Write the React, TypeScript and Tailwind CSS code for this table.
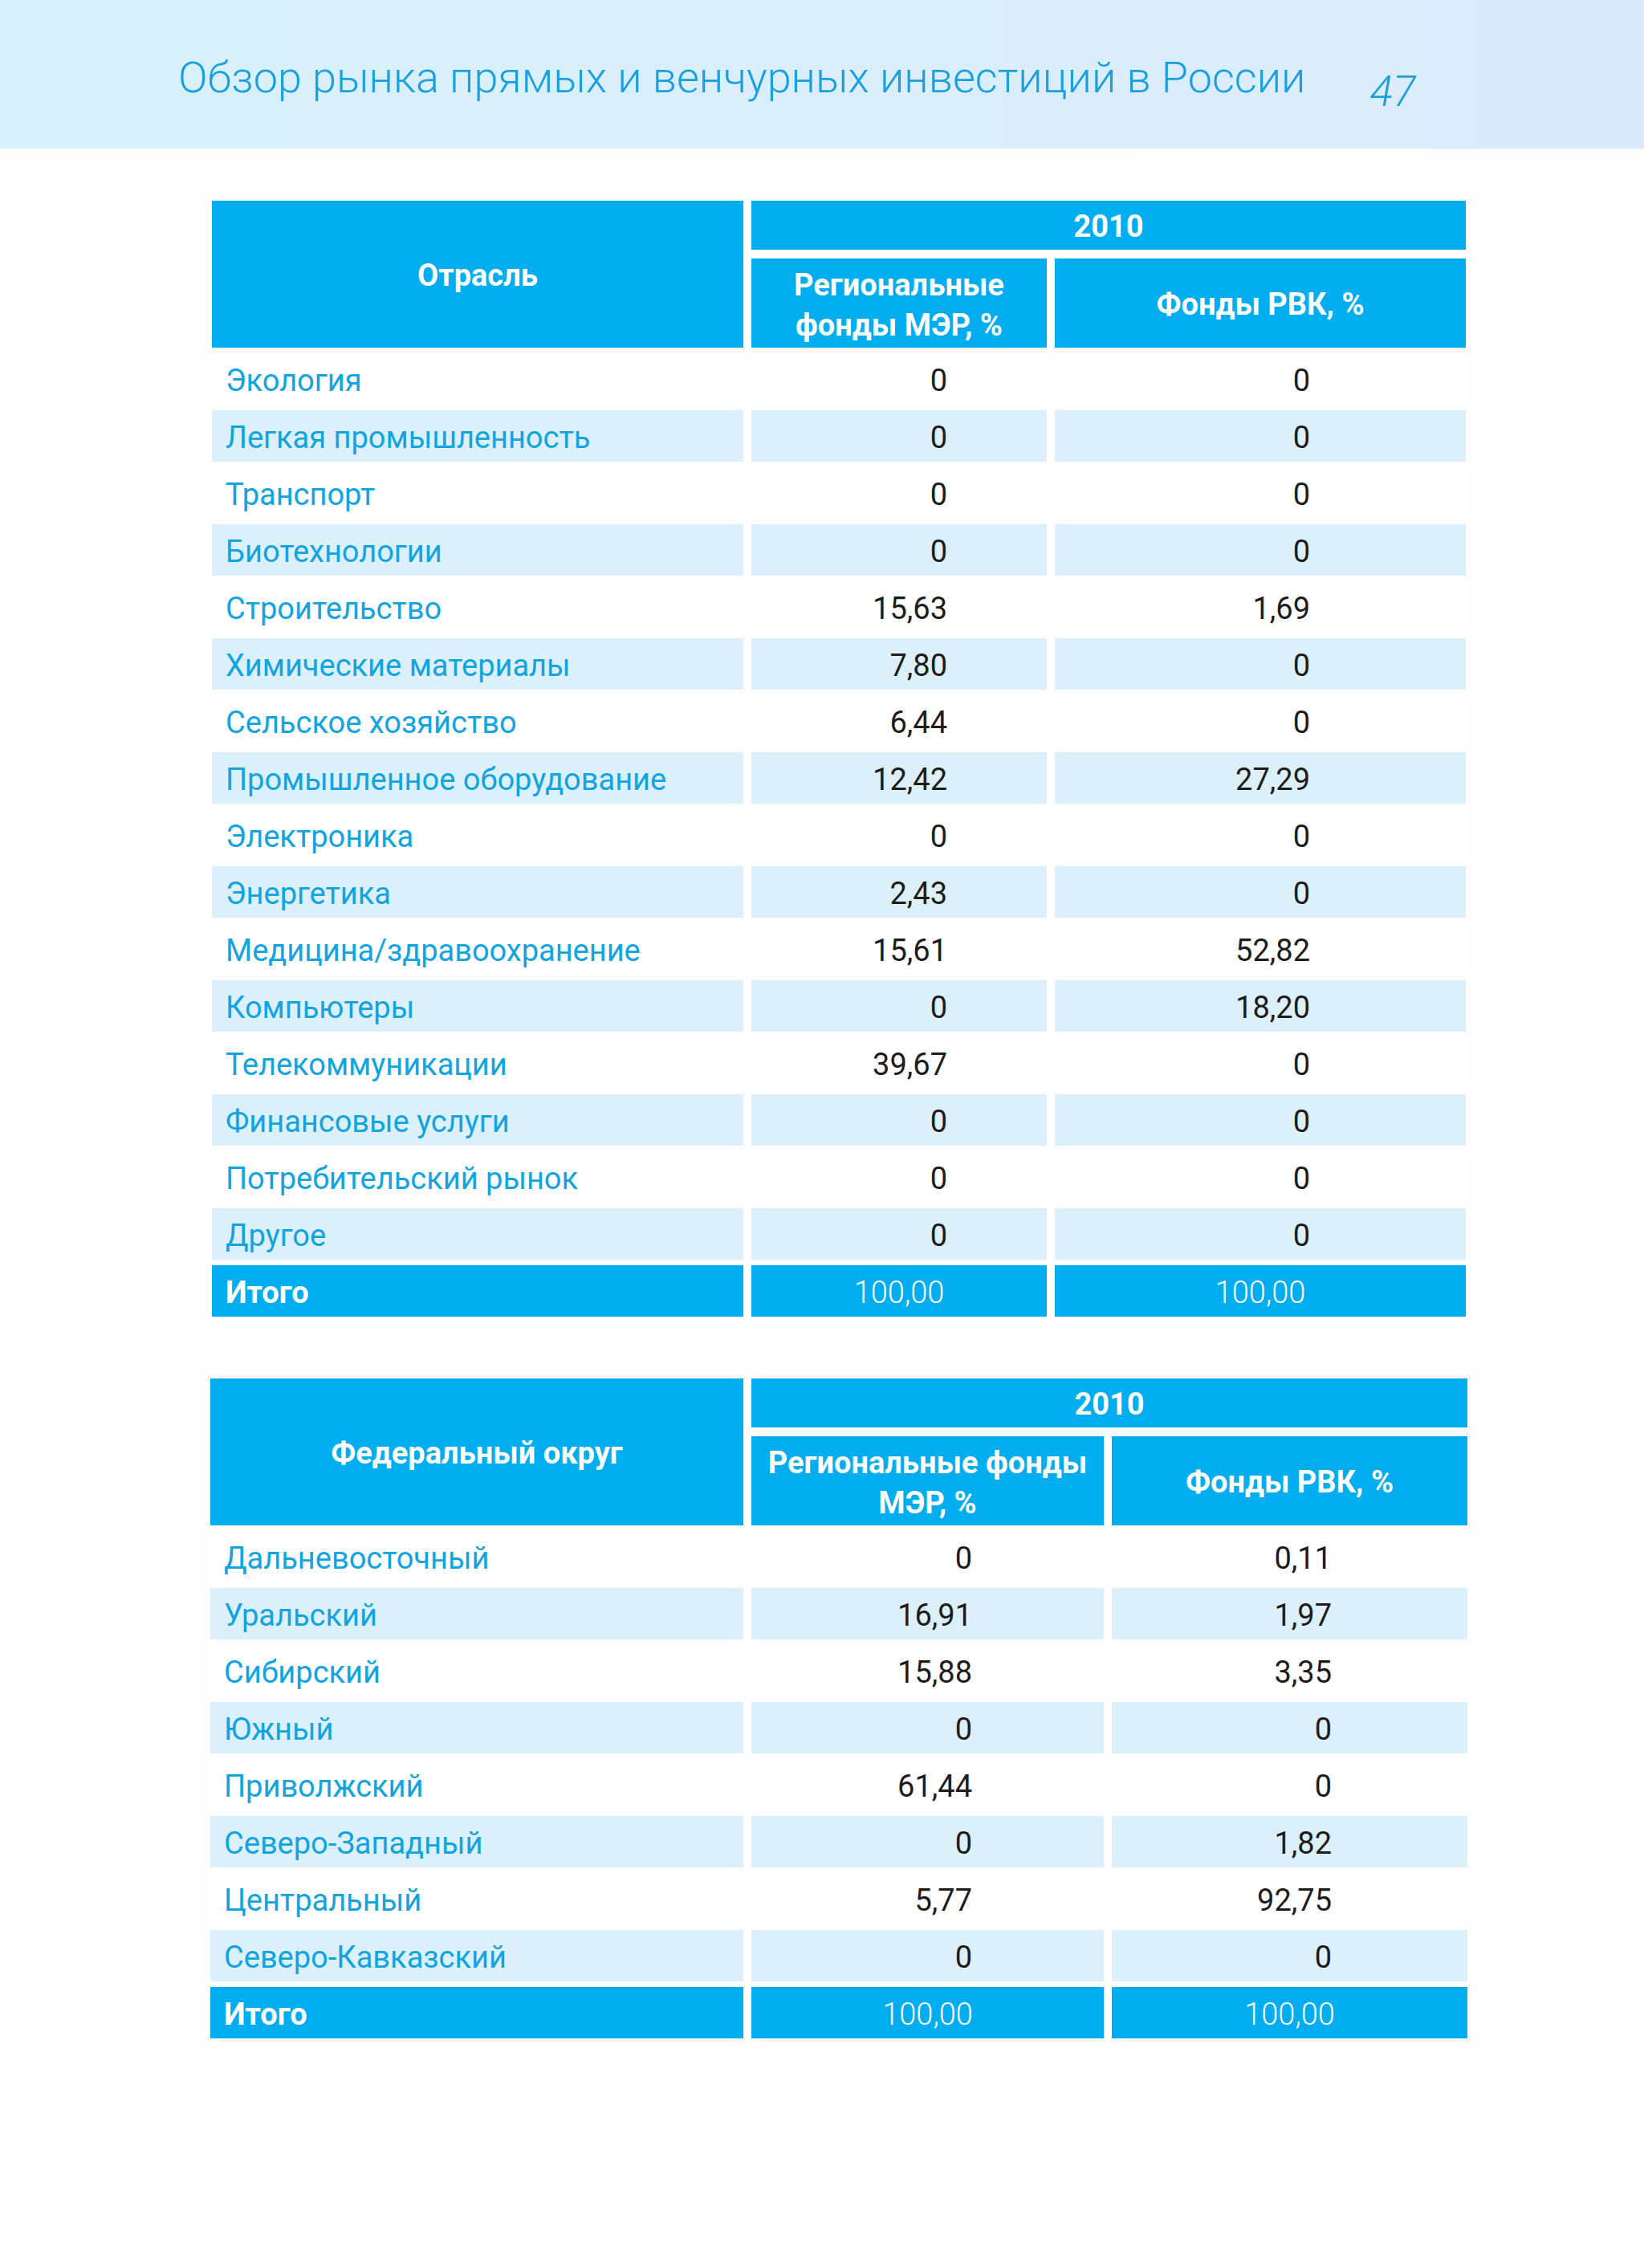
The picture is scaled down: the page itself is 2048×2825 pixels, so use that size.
import React from "react";

type Row = [string, string, string];

const industries: Row[] = [
  ["Экология", "0", "0"],
  ["Легкая промышленность", "0", "0"],
  ["Транспорт", "0", "0"],
  ["Биотехнологии", "0", "0"],
  ["Строительство", "15,63", "1,69"],
  ["Химические материалы", "7,80", "0"],
  ["Сельское хозяйство", "6,44", "0"],
  ["Промышленное оборудование", "12,42", "27,29"],
  ["Электроника", "0", "0"],
  ["Энергетика", "2,43", "0"],
  ["Медицина/здравоохранение", "15,61", "52,82"],
  ["Компьютеры", "0", "18,20"],
  ["Телекоммуникации", "39,67", "0"],
  ["Финансовые услуги", "0", "0"],
  ["Потребительский рынок", "0", "0"],
  ["Другое", "0", "0"],
];

const districts: Row[] = [
  ["Дальневосточный", "0", "0,11"],
  ["Уральский", "16,91", "1,97"],
  ["Сибирский", "15,88", "3,35"],
  ["Южный", "0", "0"],
  ["Приволжский", "61,44", "0"],
  ["Северо-Западный", "0", "1,82"],
  ["Центральный", "5,77", "92,75"],
  ["Северо-Кавказский", "0", "0"],
];

const font = { fontFamily: "Roboto, 'Noto Sans', sans-serif" };

function Table({
  title,
  sub1,
  rows,
  w1,
  w2,
  w3,
  pr2,
  pr3,
}: {
  title: string;
  sub1: React.ReactNode;
  rows: Row[];
  w1: string;
  w2: string;
  w3: string;
  pr2: string;
  pr3: string;
}) {
  return (
    <div className="flex flex-col">
      <div className="flex gap-x-[10px]">
        <div className={`${w1} h-[183px] bg-[#00adef] flex items-center justify-center pt-[4px] text-white font-bold text-[38px]`}>
          {title}
        </div>
        <div className="flex flex-col gap-y-[11px]">
          <div className="h-[61px] bg-[#00adef] flex items-center justify-center pt-[4px] text-white font-bold text-[38px]">
            2010
          </div>
          <div className="flex gap-x-[10px] h-[111px]">
            <div className={`${w2} bg-[#00adef] flex items-center justify-center pt-[4px] text-center text-white font-bold text-[38px] leading-[50px]`}>
              {sub1}
            </div>
            <div className={`${w3} bg-[#00adef] flex items-center justify-center pt-[4px] text-white font-bold text-[38px]`}>
              Фонды РВК, %
            </div>
          </div>
        </div>
      </div>
      {rows.map((r, i) => {
        const shade = i % 2 === 1 ? "bg-[#dcf0fb]" : "bg-white";
        return (
          <div key={r[0]} className="flex gap-x-[10px] mt-[7px] h-[64px] text-[38px]">
            <div className={`${w1} ${shade} flex items-center pl-[17px] pt-[5px] text-[#12a4e0]`}>{r[0]}</div>
            <div className={`${w2} ${shade} flex items-center justify-end pt-[5px] ${pr2} text-[#1c1c1c]`}>{r[1]}</div>
            <div className={`${w3} ${shade} flex items-center justify-end pt-[5px] ${pr3} text-[#1c1c1c]`}>{r[2]}</div>
          </div>
        );
      })}
      <div className="flex gap-x-[10px] mt-[7px] h-[64px] text-[38px]">
        <div className={`${w1} bg-[#00adef] flex items-center pl-[17px] pt-[5px] text-white font-bold`}>Итого</div>
        <div className={`${w2} bg-[#00adef] flex items-center justify-center pt-[5px] text-white font-light`}>100,00</div>
        <div className={`${w3} bg-[#00adef] flex items-center justify-center pt-[5px] text-white font-light`}>100,00</div>
      </div>
    </div>
  );
}

export default function App() {
  return (
    <div className="w-[2048px] min-h-[2825px] bg-[#fefeff]" style={font}>
      <div className="h-[185px] bg-gradient-to-r from-[#d8f1fa] to-[#dcebfb] flex items-start pl-[222px] pt-[70px]">
        <div className="text-[54px] font-light text-[#1a9fe0] leading-none">
          Обзор рынка прямых и венчурных инвестиций в России
        </div>
        <div className="ml-[80px] mt-[18px] text-[53px] font-light italic text-[#1a9fe0] leading-none">47</div>
      </div>
      <div className="pt-[65px] pl-[264px]">
        <Table
          title="Отрасль"
          sub1={
            <span>
              Региональные
              <br />
              фонды МЭР, %
            </span>
          }
          rows={industries}
          w1="w-[662px]"
          w2="w-[368px]"
          w3="w-[512px]"
          pr2="pr-[124px]"
          pr3="pr-[194px]"
        />
      </div>
      <div className="pt-[77px] pl-[262px]">
        <Table
          title="Федеральный округ"
          sub1={
            <span>
              Региональные фонды
              <br />
              МЭР, %
            </span>
          }
          rows={districts}
          w1="w-[664px]"
          w2="w-[439px]"
          w3="w-[443px]"
          pr2="pr-[164px]"
          pr3="pr-[169px]"
        />
      </div>
    </div>
  );
}
